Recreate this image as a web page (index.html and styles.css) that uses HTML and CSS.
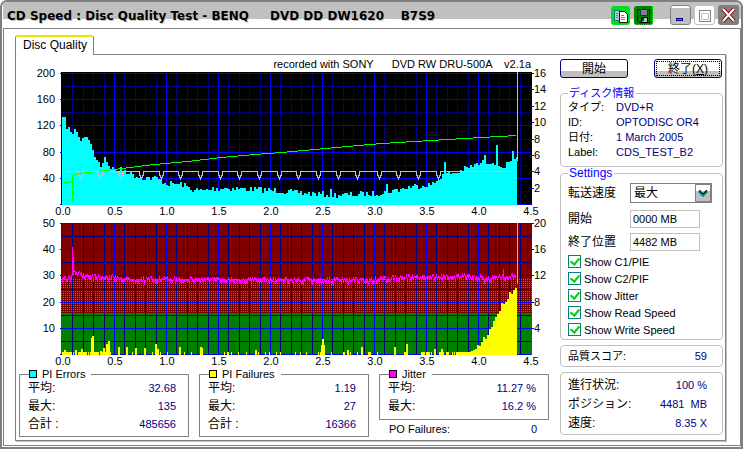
FILE: index.html
```html
<!DOCTYPE html>
<html lang="ja">
<head>
    <meta charset="UTF-8">
    <meta name="viewport" content="width=device-width, initial-scale=1.0">
    <title>CD Speed</title>
    <link rel="stylesheet" href="styles.css">
</head>
<body>
    <div class="window">
        <header class="titlebar">
            <h1>CD Speed : Disc Quality Test - BENQ &nbsp; &nbsp; DVD DD DW1620 &nbsp; &nbsp;B7S9</h1>
            <div class="tools">
                <button class="tool copy" aria-label="Copy">
                    <svg width="19" height="19" viewBox="0 0 19 19" shape-rendering="crispEdges">
                        <path d="M3 4h5l2 2v8H3z" fill="#c0c0c0" stroke="#008080"/>
                        <path d="M8 5h5l3 3v8H8z" fill="#fff" stroke="#400000"/>
                        <path d="M10 9h3M10 11h4M10 13h4M5 7h2M5 9h2M5 11h2" stroke="#808080"/>
                    </svg>
                </button>
                <button class="tool save" aria-label="Save">
                    <svg width="19" height="19" viewBox="0 0 19 19" shape-rendering="crispEdges">
                        <path d="M3 3h12v13H5l-2-2z" fill="#008000" stroke="#400000"/>
                        <path d="M6 3h7v6H6z" fill="#808080" stroke="#004040"/>
                        <path d="M7 11h6v5H7z" fill="#c0c0c0" stroke="#000"/>
                        <path d="M9 12v3" stroke="#004040" stroke-width="2"/>
                        <path d="M18 0v18H1" fill="none" stroke="#00ff00" stroke-dasharray="1 1"/>
                    </svg>
                </button>
            </div>
            <div class="controls">
                <button class="ctl min" aria-label="Minimize">
                    <svg width="20" height="19" viewBox="0 0 20 19" shape-rendering="crispEdges">
                        <path d="M5 12h7v3H5z" fill="#000080"/>
                        <path d="M6 13h5v1H6z" fill="#808080"/>
                    </svg>
                </button>
                <button class="ctl max" aria-label="Maximize">
                    <svg width="19" height="18" viewBox="0 0 19 18" shape-rendering="crispEdges">
                        <path d="M4 4h11v11H4z" fill="#fff" stroke="#808080"/>
                        <path d="M6 7h7v6H6z" fill="#fff" stroke="#c0c0c0"/>
                    </svg>
                </button>
                <button class="ctl close" aria-label="Close">
                    <svg width="21" height="20" viewBox="0 0 21 20">
                        <path d="M5 4l11 12M16 4L5 16" stroke="#800000" stroke-width="4"/>
                        <path d="M5 4l11 12M16 4L5 16" stroke="#fff" stroke-width="2"/>
                    </svg>
                </button>
            </div>
        </header>

        <main class="client">
            <div class="tab">Disc Quality</div>
            <div class="panel">
                <section class="left">
                    <svg id="charts" viewBox="0 0 530 312" role="img" aria-label="Disc quality charts"></svg>
                    <div class="stats">
                        <fieldset class="stat">
                            <legend><i class="key cyan"></i>PI Errors</legend>
                            <dl>
                                <div><dt>平均:</dt><dd>32.68</dd></div>
                                <div><dt>最大:</dt><dd>135</dd></div>
                                <div><dt>合計 :</dt><dd>485656</dd></div>
                            </dl>
                        </fieldset>
                        <fieldset class="stat">
                            <legend><i class="key yellow"></i>PI Failures</legend>
                            <dl>
                                <div><dt>平均:</dt><dd>1.19</dd></div>
                                <div><dt>最大:</dt><dd>27</dd></div>
                                <div><dt>合計 :</dt><dd>16366</dd></div>
                            </dl>
                        </fieldset>
                        <div class="last">
                            <fieldset class="stat">
                                <legend><i class="key magenta"></i>Jitter</legend>
                                <dl>
                                    <div><dt>平均:</dt><dd>11.27 %</dd></div>
                                    <div><dt>最大:</dt><dd>16.2 %</dd></div>
                                </dl>
                            </fieldset>
                            <dl class="po">
                                <div><dt>PO Failures:</dt><dd>0</dd></div>
                            </dl>
                        </div>
                    </div>
                </section>

                <aside class="side">
                    <div class="actions">
                        <button class="btn">開始</button>
                        <button class="btn focus">終了(<u>X</u>)</button>
                    </div>
                    <fieldset class="group info">
                        <legend>ディスク情報</legend>
                        <dl>
                            <dt>タイプ:</dt><dd>DVD+R</dd>
                            <dt>ID:</dt><dd>OPTODISC OR4</dd>
                            <dt>日付:</dt><dd>1 March 2005</dd>
                            <dt>Label:</dt><dd>CDS_TEST_B2</dd>
                        </dl>
                    </fieldset>
                    <fieldset class="group settings">
                        <legend>Settings</legend>
                        <div class="field speed">
                            <label for="speed">転送速度</label>
                            <div class="combo">
                                <select id="speed"><option>最大</option></select>
                                <svg class="arrow" width="16" height="18" viewBox="0 0 16 18">
                                    <path d="M0 0h16v18H0z" fill="#c0c0c0"/>
                                    <path d="M0 0h16v7H0z" fill="#fff"/>
                                    <path d="M.5.5h15v17H.5z" fill="none" stroke="#808080"/>
                                    <path d="M4 7l4 4 4-4" fill="none" stroke="#008080" stroke-width="3"/>
                                    <path d="M4 6l4 4 4-4" fill="none" stroke="#000"/>
                                </svg>
                            </div>
                        </div>
                        <div class="field">
                            <label for="start">開始</label>
                            <input id="start" type="text" value="0000 MB">
                        </div>
                        <div class="field">
                            <label for="end">終了位置</label>
                            <input id="end" type="text" value="4482 MB">
                        </div>
                        <div class="checks">
                            <label><input type="checkbox" checked>Show C1/PIE</label>
                            <label><input type="checkbox" checked>Show C2/PIF</label>
                            <label><input type="checkbox" checked>Show Jitter</label>
                            <label><input type="checkbox" checked>Show Read Speed</label>
                            <label><input type="checkbox" checked>Show Write Speed</label>
                        </div>
                    </fieldset>
                    <div class="group box score">
                        <dl>
                            <div><dt>品質スコア:</dt><dd>59</dd></div>
                        </dl>
                    </div>
                    <div class="group box progress">
                        <dl>
                            <div><dt>進行状況:</dt><dd>100 %</dd></div>
                            <div><dt>ポジション:</dt><dd>4481 &nbsp;MB</dd></div>
                            <div><dt>速度:</dt><dd>8.35 X</dd></div>
                        </dl>
                    </div>
                </aside>
            </div>
        </main>
    </div>
    <script src="charts.js"></script>
</body>
</html>
```

FILE: styles.css
```css
* {
    box-sizing: border-box;
}

body {
    margin: 0;
    background: #fff;
    color: #000;
    font-family: "Liberation Sans", "Noto Sans CJK JP", sans-serif;
    font-size: 12px;
    line-height: 16px;
}

button, input, select {
    font: inherit;
    color: inherit;
}

dl, dd, h1, fieldset {
    margin: 0;
    padding: 0;
}

.window {
    min-height: 100vh;
    border: 2px solid #808080;
    border-radius: 7px 7px 0 0;
    padding: 0 0 1px 1px;
    overflow: hidden;
}

.titlebar {
    display: flex;
    align-items: center;
    height: 26px;
    padding: 0 2px 0 4px;
    background: linear-gradient(#c0c0c0 17px, #fff 17px);
}

.titlebar h1 {
    flex: 1;
    padding-top: 2px;
    font-family: "DejaVu Sans", "Liberation Sans", sans-serif;
    font-size: 12px;
    line-height: 16px;
    white-space: nowrap;
    text-shadow: 1px 1px #c0c0c0;
}

.tools, .controls {
    display: flex;
    gap: 4px;
}

.controls {
    gap: 3px;
    margin-left: 17px;
}

.tool, .ctl {
    display: block;
    padding: 0;
    border: 0;
    border-radius: 3px;
}

.tool {
    width: 19px;
    height: 19px;
    background: #00e020;
}

.tool svg, .ctl svg {
    display: block;
}

.tool.save {
    background: #008000;
}

.ctl {
    width: 21px;
    height: 20px;
}

.min {
    background: linear-gradient(#fff 2px, #c0c0c0 2px);
    border: 1px solid #808080;
}

.max {
    background: #fff;
    border: 1px solid #c0c0c0;
}

.close {
    background: #808080;
}

.client {
    border: 1px solid #808080;
    padding: 6px 14px 4px 11px;
}

.tab {
    position: relative;
    width: 79px;
    height: 20px;
    margin-bottom: -1px;
    padding-left: 7px;
    border: 1px solid #808080;
    border-top: 2px solid #e8e800;
    border-bottom: 0;
    border-radius: 3px 3px 0 0;
    background: #fff;
    line-height: 17px;
    white-space: nowrap;
}

.panel {
    display: flex;
    gap: 11px;
    border: 1px solid #808080;
    box-shadow: 1px 1px #c0c0c0;
    padding: 2px 2px 3px 3px;
}

.left {
    flex: 1;
    min-width: 0;
}

#charts {
    display: block;
    width: 100%;
}

#charts text {
    font-size: 11px;
}

.stats {
    display: grid;
    grid-template-columns: 1fr 1fr 1fr;
    gap: 10px;
}

.stat {
    min-width: 0;
    border: 1px solid #808080;
    padding: 0 12px 2px 8px;
}

.last .stat {
    padding-bottom: 4px;
}

.stat legend {
    margin-left: 1px;
    padding: 0 6px 0 0;
    font-size: 11px;
    line-height: 10px;
}

.key {
    display: inline-block;
    width: 8px;
    height: 8px;
    margin-right: 5px;
    border: 1px solid #000;
}

.cyan {
    background: #0ff;
}

.yellow {
    background: #ff0;
}

.magenta {
    background: #f0f;
}

dl > div {
    display: flex;
    justify-content: space-between;
}

dd {
    color: #000080;
    font-size: 11px;
}

.stat dl > div {
    height: 18px;
    line-height: 18px;
}

.po {
    padding: 1px 12px 0 10px;
    font-size: 11px;
}

.side {
    width: 163px;
}

.actions {
    display: flex;
    justify-content: space-between;
    padding: 2px 1px 0 0;
}

.btn {
    width: 68px;
    height: 19px;
    padding: 0;
    border: 1px solid #000080;
    border-radius: 3px;
    background: linear-gradient(#fff 11px, #c0c0c0 11px);
    line-height: 16px;
}

.focus {
    outline: 1px dotted #000;
    outline-offset: -3px;
}

.group {
    min-width: 0;
    border: 1px solid #c0c0c0;
    border-radius: 4px;
    padding: 0 7px;
}

.group legend {
    padding: 0 2px 0 1px;
    color: #00f;
    line-height: 14px;
}

.info {
    margin-top: 8px;
    padding-bottom: 6px;
    font-size: 11px;
}

.info dl {
    display: grid;
    grid-template-columns: 48px 1fr;
    line-height: 15px;
}

.settings {
    padding-bottom: 1px;
}

.settings legend {
    line-height: 12px;
}

.field {
    display: flex;
    align-items: center;
    height: 23px;
}

.field label {
    width: 62px;
}

.field input {
    width: 70px;
    height: 18px;
    padding: 0 2px;
    border: 1px solid #c0c0c0;
    font-size: 11px;
}

.speed {
    height: 28px;
}

.combo {
    position: relative;
}

.combo select {
    display: block;
    width: 82px;
    height: 20px;
    padding: 0 3px;
    border: 1px solid #808080;
    background: #fff;
    appearance: none;
}

.arrow {
    position: absolute;
    top: 1px;
    right: 1px;
    pointer-events: none;
}

.checks label {
    display: flex;
    align-items: center;
    gap: 3px;
    height: 17px;
    font-size: 11px;
    white-space: nowrap;
}

.checks input {
    width: 13px;
    height: 13px;
    margin: 0;
    border: 1px solid #008080;
    appearance: none;
}

.checks input:checked::before {
    content: "";
    display: block;
    width: 4px;
    height: 7px;
    margin: 0 0 0 3px;
    border: solid #00d000;
    border-width: 0 2px 2px 0;
    transform: rotate(40deg);
}

.box {
    margin-top: 5px;
    padding: 1px 15px 1px 7px;
}

.box dl > div {
    height: 18px;
    line-height: 18px;
}

.score {
    font-size: 11px;
}

.progress {
    padding-top: 3px;
}

.progress dl > div {
    height: 19px;
}
```

FILE: charts.js
```js
const svg = document.getElementById('charts');
const NS = 'http://www.w3.org/2000/svg';

// plot area, in viewBox units
const X0 = 43, STEP = 52, RIGHT = 513;
const CURSOR = 498;

let seed = 7;
function rand() {
    seed = (seed * 16807) % 2147483647;
    return seed / 2147483647;
}

function add(name, attrs, text) {
    const el = document.createElementNS(NS, name);
    for (const key in attrs) el.setAttribute(key, attrs[key]);
    if (text) el.textContent = text;
    svg.appendChild(el);
    return el;
}

function rect(x, y, width, height, fill) {
    add('rect', { x, y, width, height, fill, 'shape-rendering': 'crispEdges' });
}

function label(x, y, text, anchor) {
    add('text', { x, y, 'text-anchor': anchor }, text);
}

function interp(points, x) {
    for (let i = 1; i < points.length; i++) {
        const [ax, ay] = points[i - 1];
        const [bx, by] = points[i];
        if (x <= bx) return ay + (by - ay) * (x - ax) / (bx - ax);
    }
    return points[points.length - 1][1];
}

function line(points, stroke) {
    const centred = points.map(([x, y]) => [x + 0.5, y + 0.5]);
    add('polyline', { points: centred.join(' '), fill: 'none', stroke, 'shape-rendering': 'crispEdges' });
}

function grid(top, bottom, left, right) {
    const rows = 5;
    for (let i = 1; i < 45; i++) {
        if (i % 5) rect(X0 + Math.round(i * STEP / 5), top, 1, bottom - top, '#000080');
    }
    for (let i = 0; i < rows; i++) {
        rect(X0 - 1, Math.round(top + (i + 0.5) * (bottom - top) / rows), RIGHT - X0, 1, '#000080');
    }
    for (let i = 1; i < 9; i++) rect(X0 + i * STEP, top, 1, bottom - top, '#0000ff');
    for (let i = 0; i <= rows; i++) {
        const y = Math.round(top + i * (bottom - top) / rows);
        rect(X0 - 2, y, RIGHT - X0 + 1, 1, '#0000ff');
        if (left[i]) label(36, y + 4, left[i], 'end');
    }
    right.forEach((text, i) => {
        const y = Math.round(top + i * (bottom - top) / right.length);
        rect(RIGHT - 1, y, 3, 1, '#0000ff');
        label(515, y + 4, text, 'start');
    });
    for (let i = 0; i <= 9; i++) label(X0 + 1 + i * STEP, bottom + 11, (i / 2).toFixed(1), 'middle');
}

label(512, 11, 'recorded with SONY \u00a0 \u00a0 \u00a0DVD RW DRU-500A \u00a0 \u00a0v2.1a', 'end');

// PI errors, read and write speed
rect(X0 - 1, 15, RIGHT - X0 + 1, 133, '#000');
grid(16, 147, ['200', '160', '120', '80', '40'], ['16', '14', '12', '10', '8', '6', '4', '2']);

const errors = [[43, 60], [45, 60], [46, 69], [48, 74], [50, 66], [52, 83], [54, 70], [57, 75], [61, 84], [64, 79], [67, 83],
    [69, 80], [72, 93], [75, 99], [78, 105], [81, 108], [85, 100], [90, 110], [96, 113], [105, 113], [111, 116],
    [120, 121], [136, 121], [148, 127], [161, 127], [172, 132], [179, 134], [192, 132], [208, 131], [232, 132],
    [262, 134], [282, 136], [312, 138], [330, 138], [358, 136], [376, 133], [396, 129], [414, 127], [424, 116],
    [436, 116], [448, 111], [458, 107], [466, 105], [475, 105], [482, 110], [492, 106], [498, 102]];
const errorSpikes = { 311: 132, 367: 127, 425: 105, 465: 98, 477: 88, 493: 94 };
for (let x = X0; x < CURSOR; x += 2) {
    let y = Math.round(interp(errors, x) + (x > 65 ? rand() * 6 - 3 : 0));
    if (errorSpikes[x]) y = errorSpikes[x];
    rect(x, y, Math.min(2, CURSOR - x), 148 - y, '#00ffff');
}

line([[44, 125], [50, 125], [50, 124], [53, 124], [53, 144], [53, 118], [60, 116], [95, 112], [135, 107], [168, 104],
    [202, 100], [235, 97], [262, 95], [295, 92], [328, 89], [362, 86], [395, 84], [428, 82], [462, 80], [497, 78]], '#00ff00');

const dips = [61, 81, 101, 122, 142, 161, 181, 201, 220, 240, 260, 279, 299, 319, 338, 360, 379, 399, 419];
const write = [[45, 114]];
dips.forEach(x => write.push([x - 2, 114], [x - 2, 117], [x, 121], [x + 2, 117], [x + 2, 114]));
write.push([494, 114]);
line(write, '#c0c0c0');
rect(CURSOR, 15, 1, 89, '#c0c0c0');

// PI failures and jitter
rect(X0 - 1, 166, RIGHT - X0 + 1, 132, '#800000');
rect(X0 - 1, 256, RIGHT - X0 + 1, 42, '#008000');
const defs = add('defs', {});
defs.innerHTML = '<pattern id="dots" width="2" height="2" patternUnits="userSpaceOnUse"><rect width="1" height="1" fill="#808000"/></pattern>';
add('rect', { x: X0 - 1, y: 221, width: RIGHT - X0 + 1, height: 35, fill: 'url(#dots)', 'shape-rendering': 'crispEdges' });
grid(166, 297, ['50', '40', '30', '20', '10'], ['20', '16', '12', '8', '4']);

const jitter = [[43, 221], [52, 219], [54, 214], [65, 217], [90, 219], [110, 221], [180, 221], [290, 222],
    [350, 222], [385, 219], [440, 218], [470, 220], [496, 217]];
for (let x = X0; x < 497; x++) {
    const y = Math.round(interp(jitter, x) + rand() * 4 - 2);
    rect(x, y, 1, 2 + Math.round(rand() * 3), '#ff00ff');
}
rect(53, 190, 1, 28, '#ff00ff');
rect(54, 200, 1, 18, '#ff00ff');
rect(484, 212, 1, 8, '#ff00ff');

const failures = { 43: 3, 45: 5, 56: 5, 62: 6, 72: 17, 73: 19, 81: 4, 84: 7, 87: 11, 89: 14, 99: 8, 107: 8, 116: 7,
    125: 7, 136: 11, 138: 6, 160: 8, 181: 8, 182: 7, 236: 5, 302: 10, 303: 16, 304: 10, 328: 5, 342: 8,
    375: 8, 387: 11, 415: 6, 422: 6 };
for (let x = X0; x < 440; x++) {
    const busy = x < 92 ? 0.6 : x > 400 ? 0.35 : 0.12;
    let h = rand() < busy ? 3 : 0;
    if (failures[x]) h = failures[x];
    if (h) rect(x, 298 - h, failures[x] ? 2 : 1, h, '#ffff00');
}
const rise = [[430, 295], [450, 295], [458, 290], [466, 280], [470, 273], [475, 262], [480, 252], [486, 242], [491, 236], [498, 226]];
for (let x = 438; x < CURSOR; x += 2) {
    const y = Math.round(interp(rise, x) + (x > 455 ? rand() * 6 - 3 : 0));
    rect(x, y, 2, 298 - y, '#ffff00');
}
rect(CURSOR, 166, 1, 60, '#c0c0c0');
```
